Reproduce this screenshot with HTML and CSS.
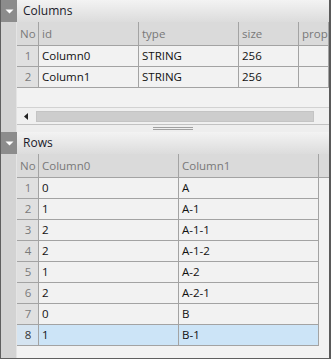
FILE: index.html
```html
<!DOCTYPE html>
<html>
<head>
<meta charset="utf-8">
<link rel="stylesheet" href="styles.css">
</head>
<body>
<div class="window">
  <section class="panel cols-panel">
    <div class="titlebar">
      <span class="toggle"><svg width="9" height="5" viewBox="0 0 9 5"><path d="M0.5 0.5 L8.5 0.5 L4.5 4.5 Z" fill="#fff"/></svg></span>
      <span class="title">Columns</span>
    </div>
    <div class="body">
      <div class="gutter"></div>
      <div class="content">
        <div class="grid grid-cols">
          <div class="cell hdr no">No</div>
          <div class="cell hdr">id</div>
          <div class="cell hdr">type</div>
          <div class="cell hdr">size</div>
          <div class="cell hdr">prop</div>

          <div class="cell no">1</div>
          <div class="cell">Column0</div>
          <div class="cell">STRING</div>
          <div class="cell">256</div>
          <div class="cell"></div>

          <div class="cell no">2</div>
          <div class="cell">Column1</div>
          <div class="cell">STRING</div>
          <div class="cell">256</div>
          <div class="cell"></div>
        </div>
        <div class="empty"></div>
        <div class="hscroll">
          <span class="arrow"><svg width="4" height="7" viewBox="0 0 4 7"><path d="M4 0 L0 3.5 L4 7 Z" fill="#222"/></svg></span>
          <span class="thumb"></span>
        </div>
      </div>
    </div>
  </section>

  <div class="splitter">
    <div class="gutter"></div>
    <div class="split-content"><span class="grip"></span></div>
  </div>

  <section class="panel rows-panel">
    <div class="titlebar">
      <span class="toggle"><svg width="9" height="5" viewBox="0 0 9 5"><path d="M0.5 0.5 L8.5 0.5 L4.5 4.5 Z" fill="#fff"/></svg></span>
      <span class="title">Rows</span>
    </div>
    <div class="body">
      <div class="gutter"></div>
      <div class="content">
        <div class="grid grid-rows">
          <div class="cell hdr no">No</div>
          <div class="cell hdr">Column0</div>
          <div class="cell hdr">Column1</div>
          <div class="cell hdr filler"></div>

          <div class="cell no">1</div><div class="cell">0</div><div class="cell">A</div><div class="blank"></div>
          <div class="cell no">2</div><div class="cell">1</div><div class="cell">A-1</div><div class="blank"></div>
          <div class="cell no">3</div><div class="cell">2</div><div class="cell">A-1-1</div><div class="blank"></div>
          <div class="cell no">4</div><div class="cell">2</div><div class="cell">A-1-2</div><div class="blank"></div>
          <div class="cell no">5</div><div class="cell">1</div><div class="cell">A-2</div><div class="blank"></div>
          <div class="cell no">6</div><div class="cell">2</div><div class="cell">A-2-1</div><div class="blank"></div>
          <div class="cell no">7</div><div class="cell">0</div><div class="cell">B</div><div class="blank"></div>
          <div class="cell no sel">8</div><div class="cell sel">1</div><div class="cell sel">B-1</div><div class="blank"></div>
        </div>
        <div class="empty fill"></div>
      </div>
    </div>
  </section>
</div>
</body>
</html>
```

FILE: styles.css
```css
* { box-sizing: border-box; }

html, body {
  margin: 0;
  padding: 0;
  background: #f2f2f2;
}

body {
  font-family: "Open Sans", "Noto Sans", sans-serif;
  font-size: 11.5px;
  color: #111;
}

.window {
  width: 331px;
  height: 359px;
  border-left: 1px solid #5f5f5f;
  border-right: 2px solid #5a5a5a;
  border-bottom: 1px solid #5f5f5f;
  display: flex;
  flex-direction: column;
  background: #f2f2f2;
}

.panel {
  display: flex;
  flex-direction: column;
}

.rows-panel {
  flex: 1;
}

.titlebar {
  height: 22px;
  display: flex;
  align-items: stretch;
  background: linear-gradient(#f3f3f3, #dcdcdc);
}

.toggle {
  width: 16px;
  background: #8c8c8c;
  display: flex;
  align-items: center;
  justify-content: center;
  padding-top: 1px;
}

.toggle svg { display: block; }

.title {
  padding-left: 6px;
  line-height: 21px;
  font-size: 12px;
  color: #1a1a2a;
}

.body {
  display: flex;
  flex: 1;
}

.gutter {
  width: 16px;
  background: #d3d3d3;
  border-right: 1px solid #e4e4e4;
  flex: none;
}

.content {
  flex: 1;
  display: flex;
  flex-direction: column;
  background: #f2f2f2;
}

.grid {
  display: grid;
  grid-auto-rows: 21px;
}

.grid-cols {
  grid-template-columns: 22px 100px 100px 60px 30px;
  grid-template-rows: 24px;
}

.grid-rows {
  grid-template-columns: 22px 140px 140px 10px;
  grid-template-rows: 24px;
}

.cell {
  border-right: 1px solid #a3a3a3;
  border-bottom: 1px solid #a3a3a3;
  padding-left: 3px;
  line-height: 20px;
  white-space: nowrap;
  overflow: hidden;
  background: #f2f2f2;
}

.cell.hdr {
  background: #dadada;
  color: #787878;
  line-height: 23px;
}

.cell.no {
  background: #e0e0e0;
  color: #7a7a7a;
  text-align: center;
  padding-left: 1px;
}

.cell.hdr.no {
  background: #dadada;
  text-align: left;
  padding-left: 3px;
}

.cell.hdr.filler {
  border-right: none;
}

.blank {
  background: #f2f2f2;
}

.cell.sel {
  background: #cce4f7;
}

.cell.no.sel {
  background: #d5e4f1;
  color: #333;
}

.empty {
  height: 19px;
}

.empty.fill {
  flex: 1;
}

.hscroll {
  height: 17px;
  border-top: 1px solid #d2d2d2;
  background: #f0f0f0;
  display: flex;
  align-items: center;
  padding-left: 7px;
}

.arrow {
  width: 12px;
  display: flex;
  align-items: center;
}

.arrow svg { display: block; }

.thumb {
  height: 11px;
  width: 278px;
  background: #cdcdcd;
  border: 1px solid #c4c4c4;
}

.splitter {
  height: 8px;
  display: flex;
}

.split-content {
  flex: 1;
  border-top: 1px solid #c2c2c2;
  background: #eeeeee;
  display: flex;
  justify-content: center;
  padding-top: 2px;
  padding-right: 1px;
}

.grip {
  width: 40px;
  height: 3px;
  border-top: 1px solid #a0a0a0;
  border-bottom: 1px solid #a0a0a0;
}
```
